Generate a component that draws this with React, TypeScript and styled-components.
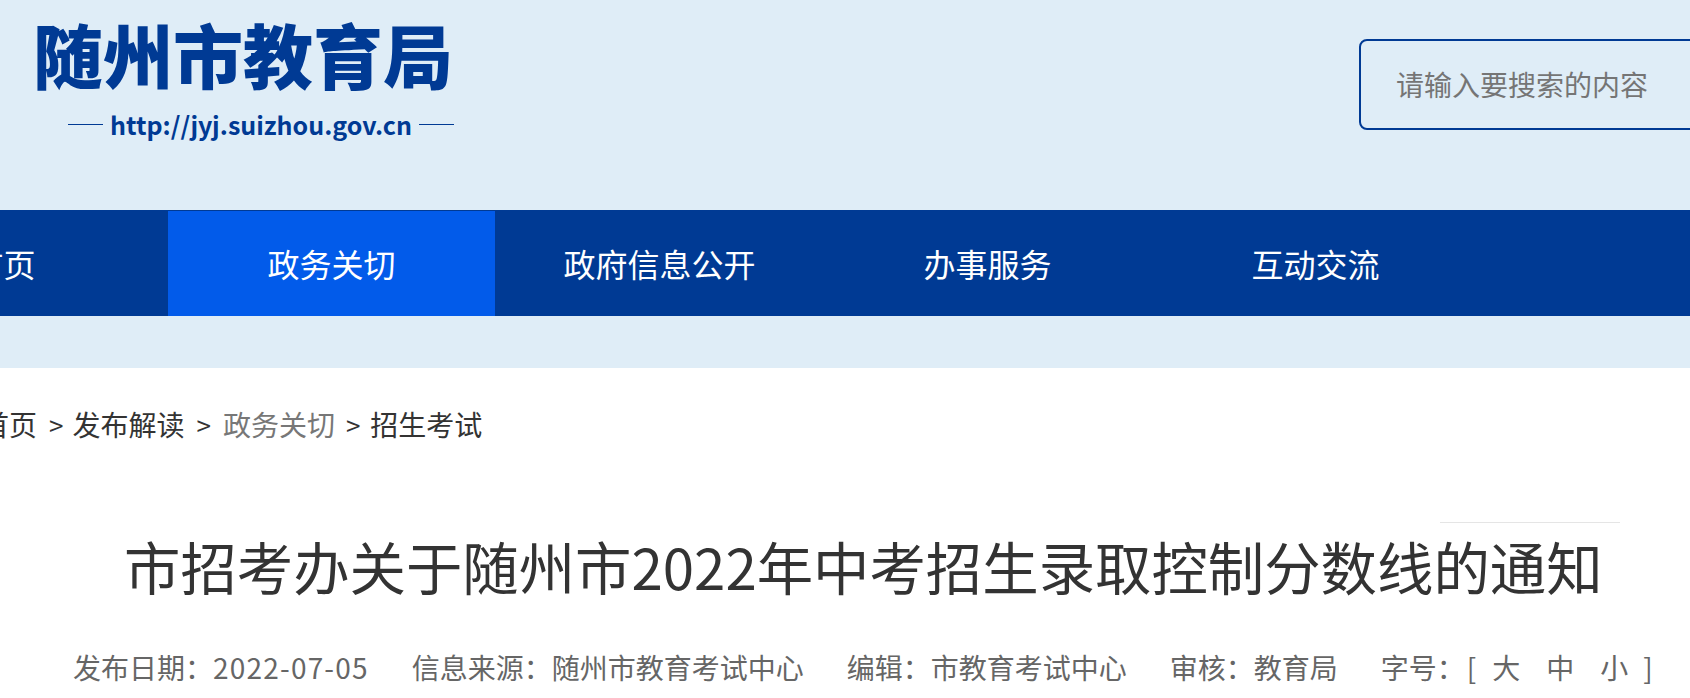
import React from "react";
import styled, { createGlobalStyle } from "styled-components";

const GlobalStyle = createGlobalStyle`
  html, body {
    margin: 0;
    padding: 0;
    height: 100%;
    overflow: hidden;
    background: #fff;
  }
  body {
    font-family: "Noto Sans CJK SC", "Noto Sans", sans-serif;
  }
`;

const navItems = ["首页", "政务关切", "政府信息公开", "办事服务", "互动交流"];

function App() {
  return (
    <Page>
      <GlobalStyle />
      <Banner>
        <TopRow>
          <Logo>
            <LogoTitle>随州市教育局</LogoTitle>
            <LogoUrl>http://jyj.suizhou.gov.cn</LogoUrl>
          </Logo>
          <SearchInput placeholder="请输入要搜索的内容" />
        </TopRow>
        <Nav>
          {navItems.map((item) => (
            <NavItem key={item} $active={item === "政务关切"}>
              {item}
            </NavItem>
          ))}
        </Nav>
      </Banner>
      <Breadcrumb>
        <span>首页</span>
        <Sep>&gt;</Sep>
        <span>发布解读</span>
        <Sep>&gt;</Sep>
        <CrumbLink>政务关切</CrumbLink>
        <Sep>&gt;</Sep>
        <span>招生考试</span>
      </Breadcrumb>
      <Article>
        <Rule />
        <Title>市招考办关于随州市2022年中考招生录取控制分数线的通知</Title>
        <Meta>
          <span>
            发布日期：<DateValue>2022-07-05</DateValue>
          </span>
          <span>信息来源：随州市教育考试中心</span>
          <span>编辑：市教育考试中心</span>
          <span>审核：教育局</span>
          <FontSizes>
            字号：<Bracket>[</Bracket>
            <SizeOption>大</SizeOption>
            <SizeOption>中</SizeOption>
            <SizeOption>小</SizeOption>
            <Bracket>]</Bracket>
          </FontSizes>
        </Meta>
      </Article>
    </Page>
  );
}

const Page = styled.div`
  width: 1690px;
  height: 698px;
  overflow: hidden;
`;

const Banner = styled.header`
  background: #dfedf7;
  padding-bottom: 52px;
`;

const TopRow = styled.div`
  display: flex;
  justify-content: space-between;
  align-items: flex-start;
  height: 210px;
  padding-left: 33px;
`;

const Logo = styled.div`
  display: flex;
  flex-direction: column;
  width: 425px;
  color: #003a94;
`;

const LogoTitle = styled.div`
  margin-top: 18px;
  font-size: 70px;
  line-height: 72px;
  font-weight: 900;
  white-space: nowrap;
`;

const LogoUrl = styled.div`
  display: flex;
  align-items: center;
  gap: 7px;
  margin-top: 17px;
  font-size: 25px;
  line-height: 34px;
  font-weight: 700;
  white-space: nowrap;
  padding-left: 35px;

  &::before,
  &::after {
    content: "";
    width: 35px;
    height: 1px;
    background: #003a94;
  }
`;

const SearchInput = styled.input`
  box-sizing: border-box;
  flex: none;
  width: 401px;
  height: 91px;
  margin: 39px -70px 0 0;
  padding: 0 0 2px 35px;
  border: 2px solid #003a94;
  border-radius: 8px;
  background: transparent;
  font: 400 28px "Noto Sans CJK SC", sans-serif;
  outline: none;

  &::placeholder {
    color: #757575;
    opacity: 1;
  }
`;

const Nav = styled.nav`
  display: flex;
  gap: 1px;
  height: 105px;
  margin-left: -160px;
  width: 1850px;
  border-top: 1px solid #003a94;
  background: #003a94;
`;

const NavItem = styled.a<{ $active?: boolean }>`
  flex: none;
  width: 327px;
  text-align: center;
  font-size: 32px;
  line-height: 104px;
  color: #fff;
  background: ${(p) => (p.$active ? "#025bea" : "transparent")};
`;

const Breadcrumb = styled.div`
  display: flex;
  align-items: center;
  height: 40px;
  margin: 36px 0 0 -19px;
  font-size: 28px;
  color: #333;
  white-space: nowrap;
`;

const Sep = styled.span`
  margin: 0 12px;
  font-size: 26px;

  &:nth-child(2) {
    margin-right: 9px;
  }

  &:nth-child(6) {
    margin: 0 10px 0 11px;
  }
`;

const CrumbLink = styled.a`
  color: #777;
`;

const Article = styled.article`
  display: flex;
  flex-direction: column;
  margin-top: 78px;
`;

const Rule = styled.div`
  align-self: flex-end;
  width: 180px;
  height: 1px;
  margin-right: 70px;
  background: #e5e5e5;
`;

const Title = styled.h1`
  margin: 5px 0 0 124px;
  font-size: 56.4px;
  line-height: 76px;
  font-weight: 400;
  color: #333;
  white-space: nowrap;
`;

const Meta = styled.div`
  display: flex;
  gap: 43px;
  margin: 43px 0 0 73px;
  font-size: 28px;
  line-height: 40px;
  color: #666;
  white-space: nowrap;
`;

const DateValue = styled.span`
  letter-spacing: 1.2px;
`;

const FontSizes = styled.span`
  display: inline-flex;
  align-items: center;
`;

const Bracket = styled.span`
  margin: 0 16px 0 2px;

  &:last-child {
    margin: 0 0 0 15px;
  }
`;

const SizeOption = styled.a`
  margin-right: 26px;

  &:nth-last-child(2) {
    margin-right: 0;
  }
`;

export default App;
